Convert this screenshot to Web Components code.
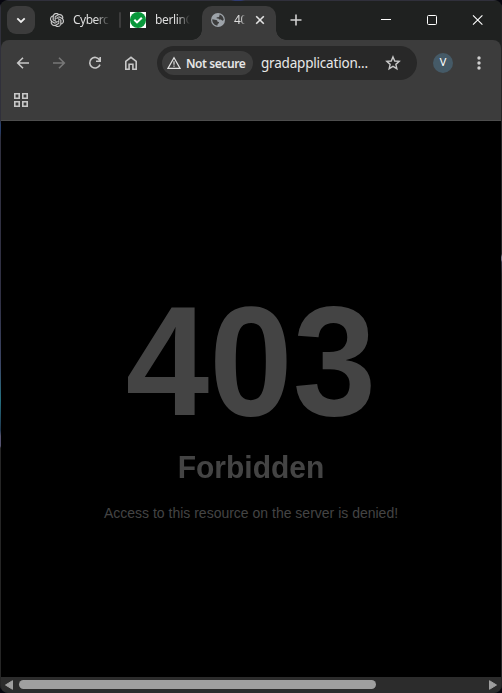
<!DOCTYPE html>
<html lang="en">
<head>
<meta charset="utf-8">
<title>403 Forbidden</title>
<style>
body{margin:0;background:#07070f;font-family:"Noto Sans","Open Sans",sans-serif;overflow:hidden}
</style>
</head>
<body>
<browser-window></browser-window>
<script>
function define(name, html){
  const t=document.createElement('template');
  t.innerHTML=html;
  customElements.define(name,class extends HTMLElement{
    constructor(){super();this.attachShadow({mode:'open'}).append(t.content.cloneNode(true));}
  });
}

define('tab-label',`<style>
:host{display:block;white-space:nowrap;font-size:12px;line-height:20px;color:#dedede;letter-spacing:-.35px;-webkit-mask-image:linear-gradient(to right,#000 var(--solid),transparent var(--clear));mask-image:linear-gradient(to right,#000 var(--solid),transparent var(--clear))}
</style><slot></slot>`);

define('tab-strip',`<style>
:host{display:grid;grid-template-columns:6px 28px 15px 14px 9px 40px 6px 2px 9px 16px 9px 44px 3px 74px 10px 18px 72px 16px 30px 16px 30px 16px;grid-template-rows:40px;height:40px;box-sizing:border-box;align-items:center;background:linear-gradient(to right,transparent 230px,#303b72 234px 240px,transparent 244px) 0 0/100% 1px no-repeat,linear-gradient(#30303b,#30303b) 0 0/100% 1px no-repeat,#1f2120;border-radius:8px 8px 0 0}
svg{display:block}
.menu{grid-column:2;width:28px;height:28px;border-radius:9px;background:#3c3c3c}
.sep{grid-column:8;width:2px;height:16px;background:#3c3c3c;border-radius:1px}
.active{grid-column:14;align-self:end;height:34px;position:relative;background:#3c3c3c;border-radius:10px 10px 0 0;display:flex;align-items:center;box-sizing:border-box;padding:0 10px 6px 9px}
.active::before,.active::after{content:"";position:absolute;bottom:0;width:10px;height:10px}
.active::before{left:-10px;background:radial-gradient(circle at 0 0,transparent 9.5px,#3c3c3c 10px)}
.active::after{right:-10px;background:radial-gradient(circle at 100% 0,transparent 9.5px,#3c3c3c 10px)}
</style>
<svg class="menu" viewBox="0 0 28 28"><path d="M10.3 12.3L14 16l3.700-3.700" fill="none" stroke="#eee" stroke-width="1.8"/></svg>
<svg style="grid-column:4" width="14" height="14" viewBox="0 0 24 24" fill="#d5d5d5" stroke="#d5d5d5" stroke-width=".4"><path d="M22.280 9.820a6 6 0 0 0-.520-4.910 6.050 6.050 0 0 0-6.510-2.900A6.070 6.070 0 0 0 4.980 4.180a6 6 0 0 0-4 2.900 6.050 6.050 0 0 0 .740 7.100 6 6 0 0 0 .510 4.910 6.050 6.050 0 0 0 6.520 2.900A6 6 0 0 0 13.260 24a6.060 6.060 0 0 0 5.770-4.210 6 6 0 0 0 4-2.900 6.060 6.060 0 0 0-.750-7.070zM13.260 22.430a4.480 4.480 0 0 1-2.880-1.040l.140-.080 4.780-2.760a.8.8 0 0 0 .390-.680v-6.740l2.020 1.170.040.050v5.580a4.500 4.500 0 0 1-4.490 4.500zM3.600 18.300a4.470 4.470 0 0 1-.540-3.010l.140.090 4.780 2.760a.77.77 0 0 0 .780 0l5.840-3.370v2.330l-.030.060-4.830 2.790a4.500 4.500 0 0 1-6.140-1.650zM2.340 7.900a4.490 4.490 0 0 1 2.370-1.980v5.680a.77.77 0 0 0 .390.680l5.810 3.350-2.020 1.170h-.070l-4.830-2.790A4.500 4.500 0 0 1 2.340 7.870zm16.600 3.860l-5.840-3.390 2.020-1.160h.070l4.830 2.790a4.490 4.490 0 0 1-.680 8.100v-5.680a.79.79 0 0 0-.400-.660zm2.010-3.030l-.140-.090-4.770-2.780a.78.78 0 0 0-.790 0L9.410 9.230V6.900l.030-.060 4.830-2.790a4.500 4.500 0 0 1 6.680 4.660zM8.310 12.860l-2.020-1.160-.040-.060V6.070a4.500 4.500 0 0 1 7.370-3.450l-.140.080L8.700 5.460a.8.8 0 0 0-.390.680zm1.090-2.370l2.610-1.500 2.600 1.500v3l-2.600 1.500-2.600-1.500z"/></svg>
<tab-label style="grid-column:6;--solid:23px;--clear:37px;letter-spacing:-.5px">Cyberc</tab-label>
<span class="sep"></span>
<svg style="grid-column:10" width="16" height="16" viewBox="0 0 16 16"><path fill="#fff" d="M0 0h16v16H0z"/><circle cx="8" cy="8" r="8" fill="#08973a"/><path d="M4.300 7.800L7 10.400l4.800-4.700" fill="none" stroke="#fff" stroke-width="2.100"/></svg>
<tab-label style="grid-column:12;--solid:22px;--clear:35px">berlinG</tab-label>
<div class="active">
<svg width="14" height="14" viewBox="0 0 14 14"><circle cx="7" cy="7" r="7" fill="#9da3a9"/><path fill="#3c3c3c" d="M1.300 6.200l4 .8c.9.200 1.300.9 1.200 1.800l1.200.3c.5.200.5.800.1 1.200L6.600 11v1.600C3.400 12.400.9 9.500 1.300 6.200zM8.600 1.500c2.400.7 4.100 2.800 4.100 5.600l-1.300.6-1.500-1.200-1.800-.1-.7-1H5.700V4.200h1.700l.9-.8z"/></svg>
<tab-label style="width:16px;margin-left:9px;flex:none;--solid:7px;--clear:11px">40</tab-label>
<svg style="margin-left:auto" width="12" height="12" viewBox="0 0 12 12"><path d="M2.200 2.200l7.600 7.600M9.800 2.200L2.200 9.800" stroke="#e3e3e3" stroke-width="1.600"/></svg>
</div>
<svg style="grid-column:16" width="18" height="18" viewBox="0 0 18 18"><path d="M10 3.500v11M4.500 9h11" stroke="#d0d0d0" stroke-width="1.600"/></svg>
<svg style="grid-column:18" width="16" height="16"><path d="M5 7.500h10" stroke="#fff"/></svg>
<svg style="grid-column:20" width="16" height="16"><rect x="5.500" y="3.500" width="9" height="9" rx="1" fill="none" stroke="#fff"/></svg>
<svg style="grid-column:22" width="16" height="16"><path d="M5 3.300l9.400 9.400M14.400 3.300L5 12.700" stroke="#fff" stroke-width="1.100"/></svg>
`);

define('address-bar',`<style>
:host{display:flex;align-items:center;box-sizing:border-box;width:260px;height:34px;border-radius:17px;background:#282828;padding:0 16px 0 5px}
.chip{display:flex;align-items:center;width:91px;height:24px;border-radius:12px;background:#3c3c3c;color:#e6e6e6;font-size:12px;font-weight:600;box-sizing:border-box;padding-left:5px;white-space:nowrap;letter-spacing:-.42px}
.chip svg{margin-right:5px}
.url{margin-left:8px;color:#e8e8e8;font-size:13.500px;white-space:nowrap;width:110px;letter-spacing:-.2px}
.star{margin-left:auto}
</style>
<div class="chip"><svg width="14" height="14" viewBox="0 0 14 14"><path d="M7 1.700L13 12.300H1z" fill="none" stroke="#dedede" stroke-width="1.300"/><path d="M7 5.300v3.400M7 9.500v1.300" stroke="#dedede" stroke-width="1.200"/></svg><span>Not secure</span></div>
<span class="url">gradapplication...</span>
<svg class="star" width="16" height="16" viewBox="0 0 16 16"><path d="M8 1.900l1.750 4.100 4.450.4-3.350 2.950 1 4.350L8 11.400l-3.850 2.300 1-4.350L1.800 6.400 6.250 6z" fill="none" stroke="#c7c7c7" stroke-width="1.400"/></svg>`);

define('tool-bar',`<style>
:host{display:block;height:81px;box-sizing:border-box;background:#3c3c3c;border-bottom:1px solid #4d4d4d;border-radius:8px 8px 0 0}
.row{display:flex;align-items:center;height:46px;padding-left:14px}
svg{display:block;fill:none;stroke:#c7c7c7;stroke-width:1.600}
.nav{margin-right:20px}
address-bar{margin-left:-2px}
.avatar{width:20px;height:20px;border-radius:50%;background:#455a67;color:#fff;font:400 11px/20px Roboto,sans-serif;text-align:center;margin-left:16px}
.dots{margin-left:18px;fill:#d0d0d0;stroke:none}
.apps{margin:7px 0 0 13px}
</style>
<div class="row">
<svg class="nav" width="16" height="16" viewBox="0 0 16 16"><path d="M14 8H3M8 2.700L2.700 8 8 13.300"/></svg>
<svg class="nav" width="16" height="16" viewBox="0 0 16 16" style="stroke:#777"><path d="M2 8h11M8 2.700L13.300 8 8 13.300"/></svg>
<svg class="nav" width="16" height="16" viewBox="0 0 16 16"><path d="M12.600 5A5.300 5.300 0 1 0 13 9.600M13.200 2v4.200H9"/></svg>
<svg class="nav" width="16" height="16" viewBox="0 0 16 16"><path d="M2.800 6.300L8 2.300l5.200 4v7.900H9.900V9.300H6.100v4.900H2.800z"/></svg>
<address-bar></address-bar>
<div class="avatar">V</div>
<svg class="dots" width="16" height="16"><circle cx="8" cy="3" r="1.700"/><circle cx="8" cy="8" r="1.700"/><circle cx="8" cy="13" r="1.700"/></svg>
</div>
<svg class="apps" width="14" height="14"><path d="M.8.8h4.400v4.400H.8zM8.800.8h4.400v4.400H8.800zM.8 8.800h4.400v4.400H.8zM8.800 8.800h4.400v4.400H8.800z"/></svg>`);

define('error-page',`<style>
:host{display:block;height:556px;box-sizing:border-box;padding-top:167px;background:#000;color:#444;text-align:center;font-family:"Liberation Sans",Arial,sans-serif}
h1{margin:0;font-size:150px;line-height:150px;transform:scaleY(1.04);transform-origin:50% 127px}
h2{margin:12px 0 0;font-size:30px;line-height:35px;transform:scaleY(1.04);transform-origin:50% 28px}
p{margin:20px 0 0;font-size:14px;line-height:16px}
</style>
<h1>403</h1><h2>Forbidden</h2><p>Access to this resource on the server is denied!</p>`);

define('scroll-bar',`<style>
:host{display:flex;align-items:center;height:16px;background:#2c2c2c;border-radius:0 0 7px 7px;box-sizing:border-box;padding:0 4px 1px}
svg{display:block;fill:#9f9f9f}
.thumb{width:357px;height:9px;border-radius:5px;background:#9f9f9f;margin-left:6px}
.end{margin-left:auto}
</style>
<svg width="8" height="10"><path d="M7.500.7v8.600L.5 5z" stroke="#9f9f9f" stroke-linejoin="round"/></svg><div class="thumb"></div>
<svg class="end" width="8" height="10"><path d="M.5.700v8.600L7.500 5z" stroke="#9f9f9f" stroke-linejoin="round"/></svg>`);

define('browser-window',`<style>
:host{display:flex;box-sizing:border-box;width:502px;height:693px;border-radius:8px;overflow:hidden;background:#1f2120}
.edge{width:1px;flex:none}
.left{background:linear-gradient(#30303b 0 120px,#263f70 125px,#263a64 132px,#30303f 138px,#303044 300px,#3b4565 365px,#257080 400px,#203850 430px,#555370 436px 446px,#252525 448px)}
.right{background:linear-gradient(#252526 0 254px,#777587 257px 260px,#333343 262px,#252526 275px)}
.main{width:500px}
</style>
<div class="edge left"></div>
<div class="main"><tab-strip></tab-strip><tool-bar></tool-bar><error-page></error-page><scroll-bar></scroll-bar></div>
<div class="edge right"></div>`);
</script>
</body>
</html>
